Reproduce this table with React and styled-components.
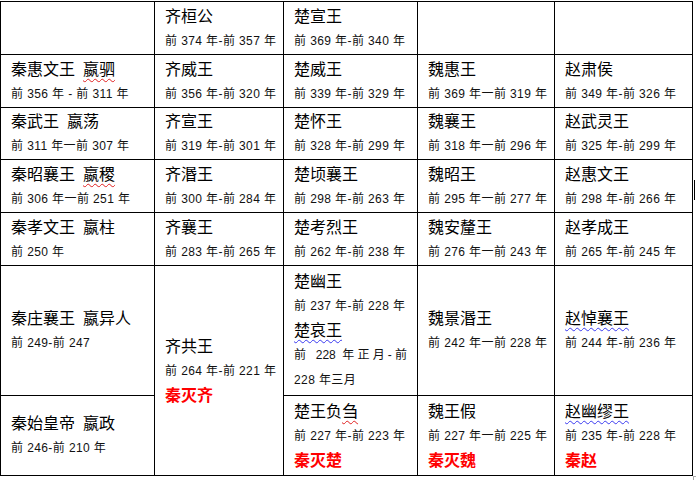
import React from "react";
import styled, { createGlobalStyle } from "styled-components";

const GlobalStyle = createGlobalStyle`
  body {
    margin: 0;
    background: #fff;
    color: #000;
    font-family: "Liberation Sans", "Noto Sans CJK SC", sans-serif;
  }
`;

const Page = styled.div`
  position: relative;
  width: 696px;
  height: 480px;
  overflow: hidden;
  padding-top: 1px;
  box-sizing: border-box;
`;

const Table = styled.div`
  display: grid;
  grid-template-columns: 154px 129px 134px 137px 138px;
  grid-template-rows: 53px 53px 52px 53px 53px 130px 80px;
  width: fit-content;
  border-left: 1px solid #000;
  border-top: 1px solid #000;
`;

const Cell = styled.div`
  box-sizing: border-box;
  border-right: 1px solid #000;
  border-bottom: 1px solid #000;
  padding: 2px 10px 0 10px;
  display: flex;
  flex-direction: column;
  justify-content: center;
  grid-row: ${(props) => (props.$rows ? `span ${props.$rows}` : "auto")};
`;

const Name = styled.div`
  font-family: "Liberation Sans", "Noto Sans CJK SC", sans-serif;
  font-size: 16px;
  line-height: 24px;
  white-space: nowrap;
`;

const Alias = styled.span`
  margin-left: 8px;
`;

const Squiggle = styled.span`
  text-decoration: underline wavy ${(props) => props.$color};
  text-decoration-thickness: 1px;
  text-underline-offset: 3px;
`;

const Date = styled.div`
  font-size: 12px;
  line-height: 25px;
  letter-spacing: 0.4px;
  color: #111;
  white-space: nowrap;
`;

const Spread = styled(Date)`
  white-space: normal;
  letter-spacing: 0;
  text-align: justify;
  text-align-last: justify;
`;

const Fallen = styled.div`
  font-size: 16px;
  line-height: 24px;
  font-weight: 700;
  color: #ff0000;
`;

const Caret = styled.div`
  position: absolute;
  left: 694px;
  top: 180px;
  width: 1px;
  height: 20px;
  background: #000;
`;

const Handle = styled.div`
  position: absolute;
  left: 693px;
  top: 476px;
  width: 4px;
  height: 5px;
  border-left: 1px solid #aaa;
  border-top: 1px solid #aaa;
`;

const RED = "#e02020";
const BLUE = "#3a3af0";

function Ruler({ name, alias, wavy, date }) {
  return (
    <Cell>
      <Name>
        {name}
        <Alias>{wavy ? <Squiggle $color={RED}>{alias}</Squiggle> : alias}</Alias>
      </Name>
      <Date>{date}</Date>
    </Cell>
  );
}

function King({ name, date }) {
  return (
    <Cell>
      <Name>{name}</Name>
      <Date>{date}</Date>
    </Cell>
  );
}

export default function App() {
  return (
    <Page>
      <GlobalStyle />
      <Table>
        <Cell />
        <King name="齐桓公" date="前 374 年-前 357 年" />
        <King name="楚宣王" date="前 369 年-前 340 年" />
        <Cell />
        <Cell />

        <Ruler name="秦惠文王" alias="嬴驷" wavy date="前 356 年 - 前 311 年" />
        <King name="齐威王" date="前 356 年-前 320 年" />
        <King name="楚威王" date="前 339 年-前 329 年" />
        <King name="魏惠王" date="前 369 年一前 319 年" />
        <King name="赵肃侯" date="前 349 年-前 326 年" />

        <Ruler name="秦武王" alias="嬴荡" date="前 311 年一前 307 年" />
        <King name="齐宣王" date="前 319 年-前 301 年" />
        <King name="楚怀王" date="前 328 年-前 299 年" />
        <King name="魏襄王" date="前 318 年一前 296 年" />
        <King name="赵武灵王" date="前 325 年-前 299 年" />

        <Ruler name="秦昭襄王" alias="嬴稷" wavy date="前 306 年一前 251 年" />
        <King name="齐湣王" date="前 300 年-前 284 年" />
        <King name="楚顷襄王" date="前 298 年-前 263 年" />
        <King name="魏昭王" date="前 295 年一前 277 年" />
        <King name="赵惠文王" date="前 298 年-前 266 年" />

        <Ruler name="秦孝文王" alias="嬴柱" date="前 250 年" />
        <King name="齐襄王" date="前 283 年-前 265 年" />
        <King name="楚考烈王" date="前 262 年-前 238 年" />
        <King name="魏安釐王" date="前 276 年一前 243 年" />
        <King name="赵孝成王" date="前 265 年-前 245 年" />

        <Ruler name="秦庄襄王" alias="嬴异人" date="前 249-前 247" />
        <Cell $rows={2}>
          <Name>齐共王</Name>
          <Date>前 264 年-前 221 年</Date>
          <Fallen>秦灭齐</Fallen>
        </Cell>
        <Cell>
          <Name>楚幽王</Name>
          <Date>前 237 年-前 228 年</Date>
          <Name>
            <Squiggle $color={BLUE}>楚哀王</Squiggle>
          </Name>
          <Spread>前 228 年正月-前</Spread>
          <Date>228 年三月</Date>
        </Cell>
        <King name="魏景湣王" date="前 242 年一前 228 年" />
        <Cell>
          <Name>
            <Squiggle $color={BLUE}>赵悼襄王</Squiggle>
          </Name>
          <Date>前 244 年-前 236 年</Date>
        </Cell>

        <Ruler name="秦始皇帝" alias="嬴政" date="前 246-前 210 年" />
        <Cell>
          <Name>
            楚王负<Squiggle $color={RED}>刍</Squiggle>
          </Name>
          <Date>前 227 年-前 223 年</Date>
          <Fallen>秦灭楚</Fallen>
        </Cell>
        <Cell>
          <Name>魏王假</Name>
          <Date>前 227 年一前 225 年</Date>
          <Fallen>秦灭魏</Fallen>
        </Cell>
        <Cell>
          <Name>
            <Squiggle $color={BLUE}>赵幽缪王</Squiggle>
          </Name>
          <Date>前 235 年-前 228 年</Date>
          <Fallen>秦赵</Fallen>
        </Cell>
      </Table>
      <Caret />
      <Handle />
    </Page>
  );
}
